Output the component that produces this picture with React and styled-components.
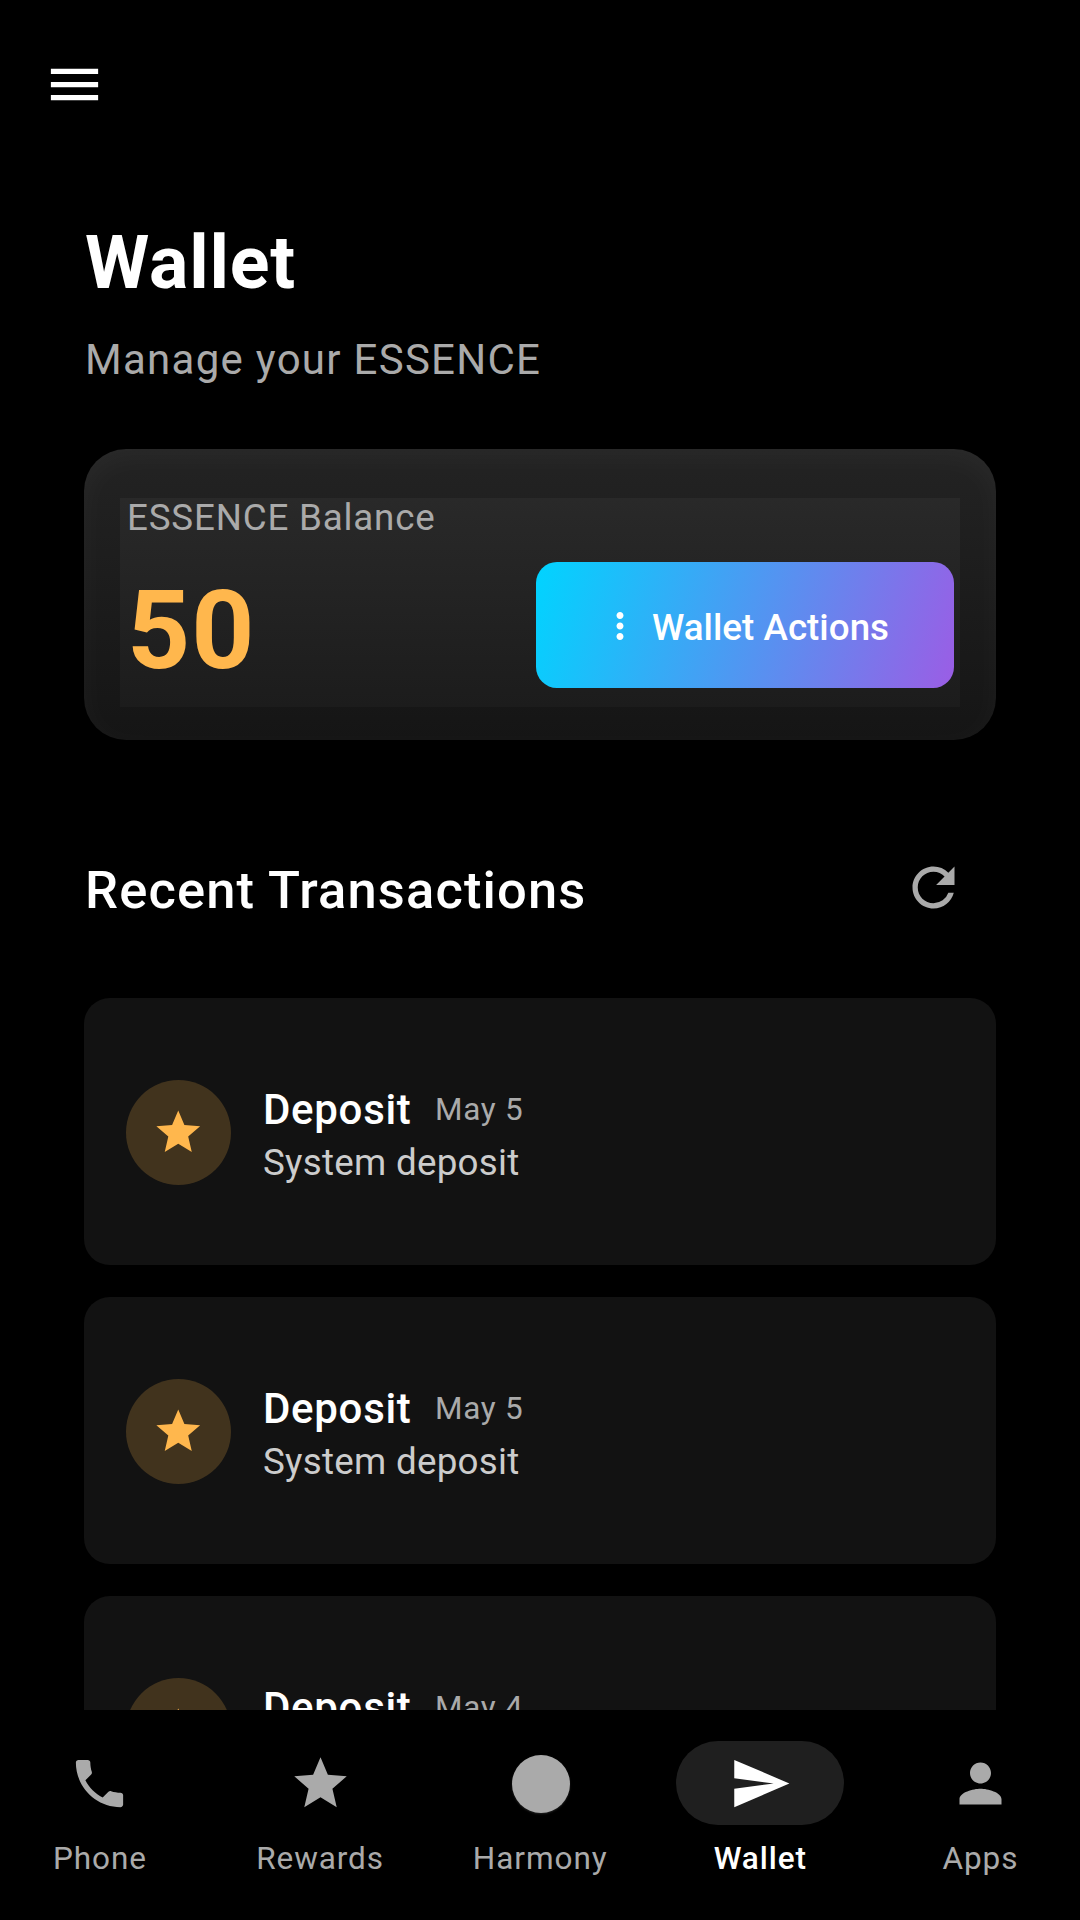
import React from "react";
import styled, { createGlobalStyle } from "styled-components";
import {
    MdMenu,
    MdMoreVert,
    MdRefresh,
    MdStar,
    MdPhone,
    MdSend,
    MdPerson,
} from "react-icons/md";

const transactions = [
    { id: 1, type: "Deposit", date: "May 5", note: "System deposit" },
    { id: 2, type: "Deposit", date: "May 5", note: "System deposit" },
    { id: 3, type: "Deposit", date: "May 4", note: "System deposit" },
];

const tabs = [
    { label: "Phone", icon: <MdPhone /> },
    { label: "Rewards", icon: <MdStar /> },
    { label: "Harmony", icon: null },
    { label: "Wallet", icon: <MdSend />, active: true },
    { label: "Apps", icon: <MdPerson /> },
];

function Transaction({ type, date, note }) {
    return (
        <TransactionCard>
            <StarBadge>
                <MdStar />
            </StarBadge>
            <Details>
                <DetailsTop>
                    <TransactionType>{type}</TransactionType>
                    <TransactionDate>{date}</TransactionDate>
                </DetailsTop>
                <Note>{note}</Note>
            </Details>
        </TransactionCard>
    );
}

export default function App() {
    return (
        <Screen>
            <GlobalStyle />
            <TopBar>
                <MdMenu />
            </TopBar>
            <Content>
                <Title>Wallet</Title>
                <Subtitle>Manage your ESSENCE</Subtitle>
                <BalanceCard>
                    <BalanceLabel>ESSENCE Balance</BalanceLabel>
                    <BalanceRow>
                        <Amount>50</Amount>
                        <ActionsButton>
                            <MdMoreVert />
                            <ActionsText>Wallet Actions</ActionsText>
                        </ActionsButton>
                    </BalanceRow>
                </BalanceCard>
                <SectionHeader>
                    <SectionTitle>Recent Transactions</SectionTitle>
                    <RefreshButton aria-label="Refresh">
                        <MdRefresh />
                    </RefreshButton>
                </SectionHeader>
                <TransactionList>
                    {transactions.map((t) => (
                        <Transaction key={t.id} type={t.type} date={t.date} note={t.note} />
                    ))}
                </TransactionList>
            </Content>
            <BottomNav>
                {tabs.map((tab) => (
                    <NavItem key={tab.label} $active={tab.active}>
                        <NavPill $active={tab.active}>{tab.icon || <HarmonyDot />}</NavPill>
                        <NavLabel $active={tab.active}>{tab.label}</NavLabel>
                    </NavItem>
                ))}
            </BottomNav>
        </Screen>
    );
}

const GlobalStyle = createGlobalStyle`
    *{
        box-sizing:border-box;
    }
    body{
        margin:0;
        background-color:#000;
        font-family:Roboto, "Liberation Sans", sans-serif;
    }
    h1, h2, p{
        margin:0;
    }
    button{
        border:none;
        background:none;
        padding:0;
        font-family:inherit;
    }
    svg{
        display:block;
        flex-shrink:0;
    }
`;

const Screen = styled.div`
    display:flex;
    flex-direction:column;
    width:1080px;
    height:1920px;
    overflow:hidden;
    background-color:#000;
    color:#fff;
`;

const TopBar = styled.header`
    display:flex;
    align-items:center;
    height:169px;
    padding-left:43px;
    flex-shrink:0;
    svg{
        width:63px;
        height:63px;
    }
`;

const Content = styled.main`
    flex:1;
    min-height:0;
    overflow:hidden;
    padding:47px 84px 0;
`;

const Title = styled.h1`
    padding-left:1px;
    font-size:73.5px;
    font-weight:700;
    line-height:94px;
    letter-spacing:0.86px;
`;

const Subtitle = styled.p`
    margin-top:18px;
    padding-left:1px;
    font-size:42px;
    line-height:63px;
    letter-spacing:1.28px;
    color:#aaa;
`;

const BalanceCard = styled.section`
    margin-top:58px;
    height:291px;
    padding:43px 42px 0;
    border-radius:42px;
    /* lighter panel sits inside the card, edges fade outwards */
    background:
        linear-gradient(180deg, #292929, #1c1c1c) 36px 49px / 840px 209px no-repeat,
        linear-gradient(180deg, #232323, #151515);
    box-shadow:inset 0 8px 32px rgba(255, 255, 255, 0.035);
`;

const BalanceLabel = styled.p`
    padding-left:1px;
    font-size:36.75px;
    line-height:52px;
    letter-spacing:0.81px;
    color:#aaa;
`;

const BalanceRow = styled.div`
    display:flex;
    align-items:flex-end;
    justify-content:space-between;
    margin-top:18px;
`;

const Amount = styled.div`
    padding-left:1px;
    font-size:110.25px;
    font-weight:700;
    line-height:115px;
    letter-spacing:0.9px;
    color:#ffb74d;
`;

const ActionsButton = styled.button`
    display:flex;
    align-items:center;
    justify-content:center;
    gap:11px;
    width:418px;
    height:126px;
    padding:2px 2px 0 0;
    border-radius:21px;
    background:linear-gradient(106.8deg, #00d4ff, #9b5de5);
    color:#fff;
    svg{
        width:42px;
        height:42px;
    }
`;

const ActionsText = styled.span`
    padding-top:3px;
    font-size:36.75px;
    font-weight:500;
    letter-spacing:0.03px;
`;

const SectionHeader = styled.div`
    display:flex;
    align-items:center;
    justify-content:space-between;
    height:126px;
    margin-top:84px;
`;

const SectionTitle = styled.h2`
    padding:6px 0 0 1px;
    font-size:52.5px;
    font-weight:500;
    line-height:74px;
    letter-spacing:1.12px;
`;

const RefreshButton = styled.button`
    display:flex;
    align-items:center;
    justify-content:center;
    width:126px;
    height:126px;
    color:#aaa;
    svg{
        width:63px;
        height:63px;
    }
`;

const TransactionList = styled.div`
    display:flex;
    flex-direction:column;
    gap:32px;
    margin-top:48px;
`;

const TransactionCard = styled.article`
    display:flex;
    align-items:flex-start;
    flex-shrink:0;
    height:267px;
    padding:82px 42px 0;
    border-radius:26px;
    background-color:#121212;
`;

const StarBadge = styled.div`
    display:flex;
    align-items:center;
    justify-content:center;
    width:105px;
    height:105px;
    border-radius:50%;
    background-color:rgba(255, 183, 77, 0.2);
    color:#ffb74d;
    svg{
        width:52.5px;
        height:52.5px;
    }
`;

const Details = styled.div`
    margin:5px 0 0 32px;
`;

const DetailsTop = styled.div`
    display:flex;
    align-items:center;
    gap:23.5px;
`;

const TransactionType = styled.span`
    font-size:42px;
    font-weight:500;
    line-height:50px;
    letter-spacing:0.7px;
`;

const TransactionDate = styled.span`
    font-size:31.5px;
    line-height:42px;
    letter-spacing:0.7px;
    color:#aaa;
`;

const Note = styled.p`
    margin-top:1px;
    font-size:36.75px;
    line-height:53px;
    letter-spacing:0.27px;
    color:#ccc;
`;

const BottomNav = styled.nav`
    display:flex;
    gap:21px;
    height:210px;
    padding:31px 0 0 0.4px;
    flex-shrink:0;
    background-color:#000;
`;

const NavItem = styled.div`
    flex:1;
    display:flex;
    flex-direction:column;
    align-items:center;
    gap:13px;
    color:${({ $active }) => ($active ? "#fff" : "#aaa")};
`;

const NavPill = styled.div`
    display:flex;
    align-items:center;
    justify-content:center;
    width:168px;
    height:84px;
    border-radius:42px;
    background-color:${({ $active }) => ($active ? "#1f1f1f" : "transparent")};
    svg{
        width:63px;
        height:63px;
    }
`;

const HarmonyDot = styled.span`
    width:58px;
    height:58px;
    margin:1px 0 0 1px;
    border-radius:50%;
    background-color:#aaa;
    box-shadow:0 1px 2px rgba(170, 170, 170, 0.2);
`;

const NavLabel = styled.span`
    font-size:31.5px;
    font-weight:${({ $active }) => ($active ? 500 : 400)};
    line-height:42px;
    letter-spacing:0.93px;
`;
